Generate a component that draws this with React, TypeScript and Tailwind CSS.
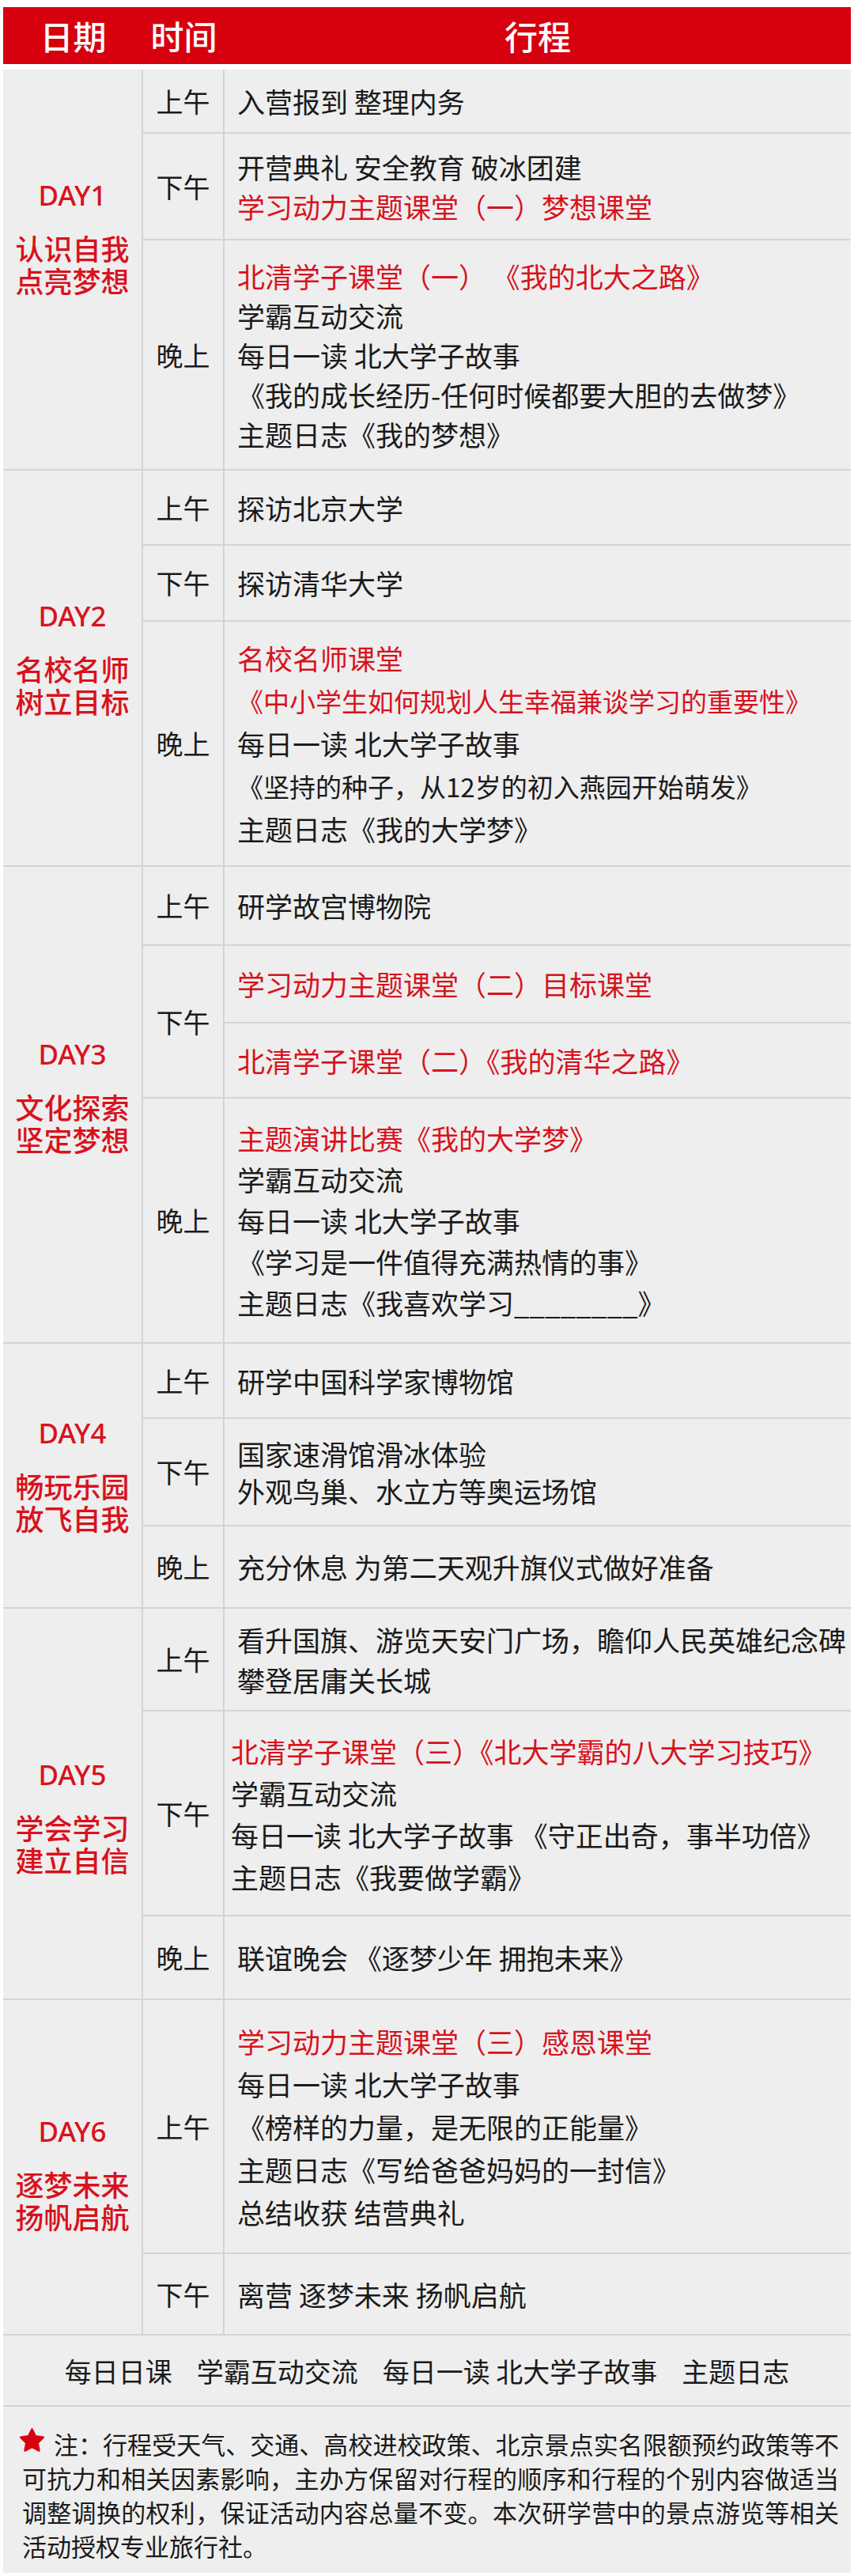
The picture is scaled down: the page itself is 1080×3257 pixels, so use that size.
import React from "react";

type Line = { t: string; red?: boolean; size?: string };
type Block = { lines: Line[]; h?: string; border?: boolean };
type Slot = {
  label: string;
  h: string;
  leading?: string;
  pl?: string;
  blocks: Block[];
};
type Day = { day: string; sub: string[]; pad: string; slots: Slot[] };

const one = (t: string, red = false): Block => ({ lines: [{ t, red }] });

const days: Day[] = [
  {
    day: "DAY1",
    sub: ["认识自我", "点亮梦想"],
    pad: "pb-[80px]",
    slots: [
      { label: "上午", h: "h-[81px]", blocks: [one("入营报到 整理内务")] },
      {
        label: "下午",
        h: "h-[135px]",
        leading: "leading-[50px]",
        blocks: [
          {
            lines: [
              { t: "开营典礼 安全教育 破冰团建" },
              { t: "学习动力主题课堂（一）梦想课堂", red: true },
            ],
          },
        ],
      },
      {
        label: "晚上",
        h: "h-[289px]",
        leading: "leading-[50px]",
        blocks: [
          {
            lines: [
              { t: "北清学子课堂（一） 《我的北大之路》", red: true },
              { t: "学霸互动交流" },
              { t: "每日一读 北大学子故事" },
              { t: "《我的成长经历-任何时候都要大胆的去做梦》" },
              { t: "主题日志《我的梦想》" },
            ],
          },
        ],
      },
    ],
  },
  {
    day: "DAY2",
    sub: ["名校名师", "树立目标"],
    pad: "pb-[24px]",
    slots: [
      { label: "上午", h: "h-[95px]", blocks: [one("探访北京大学")] },
      { label: "下午", h: "h-[96px]", blocks: [one("探访清华大学")] },
      {
        label: "晚上",
        h: "h-[308px]",
        leading: "leading-[54px]",
        blocks: [
          {
            lines: [
              { t: "名校名师课堂", red: true },
              { t: "《中小学生如何规划人生幸福兼谈学习的重要性》", red: true, size: "text-[33px]" },
              { t: "每日一读 北大学子故事" },
              { t: "《坚持的种子，从12岁的初入燕园开始萌发》", size: "text-[33px]" },
              { t: "主题日志《我的大学梦》" },
            ],
          },
        ],
      },
    ],
  },
  {
    day: "DAY3",
    sub: ["文化探索", "坚定梦想"],
    pad: "pb-[20px]",
    slots: [
      { label: "上午", h: "h-[100px]", blocks: [one("研学故宫博物院")] },
      {
        label: "下午",
        h: "h-[193px]",
        blocks: [
          { h: "h-[98px]", border: true, lines: [{ t: "学习动力主题课堂（二）目标课堂", red: true }] },
          { lines: [{ t: "北清学子课堂（二）《我的清华之路》", red: true }] },
        ],
      },
      {
        label: "晚上",
        h: "h-[308px]",
        leading: "leading-[52px]",
        blocks: [
          {
            lines: [
              { t: "主题演讲比赛《我的大学梦》", red: true },
              { t: "学霸互动交流" },
              { t: "每日一读 北大学子故事" },
              { t: "《学习是一件值得充满热情的事》" },
              { t: "主题日志《我喜欢学习________》" },
            ],
          },
        ],
      },
    ],
  },
  {
    day: "DAY4",
    sub: ["畅玩乐园", "放飞自我"],
    pad: "pb-[0px]",
    slots: [
      { label: "上午", h: "h-[95px]", blocks: [one("研学中国科学家博物馆")] },
      {
        label: "下午",
        h: "h-[136px]",
        leading: "leading-[47px]",
        blocks: [{ lines: [{ t: "国家速滑馆滑冰体验" }, { t: "外观鸟巢、水立方等奥运场馆" }] }],
      },
      { label: "晚上", h: "h-[102px]", blocks: [one("充分休息 为第二天观升旗仪式做好准备")] },
    ],
  },
  {
    day: "DAY5",
    sub: ["学会学习", "建立自信"],
    pad: "pt-[34px]",
    slots: [
      {
        label: "上午",
        h: "h-[130px]",
        leading: "leading-[51px]",
        blocks: [
          {
            lines: [{ t: "看升国旗、游览天安门广场，瞻仰人民英雄纪念碑" }, { t: "攀登居庸关长城" }],
          },
        ],
      },
      {
        label: "下午",
        h: "h-[259px]",
        leading: "leading-[53px]",
        pl: "pl-[8px]",
        blocks: [
          {
            lines: [
              { t: "北清学子课堂（三）《北大学霸的八大学习技巧》", red: true },
              { t: "学霸互动交流" },
              { t: "每日一读 北大学子故事 《守正出奇，事半功倍》" },
              { t: "主题日志《我要做学霸》" },
            ],
          },
        ],
      },
      { label: "晚上", h: "h-[104px]", blocks: [one("联谊晚会 《逐梦少年 拥抱未来》")] },
    ],
  },
  {
    day: "DAY6",
    sub: ["逐梦未来", "扬帆启航"],
    pad: "pt-[18px]",
    slots: [
      {
        label: "上午",
        h: "h-[321px]",
        leading: "leading-[54px]",
        blocks: [
          {
            lines: [
              { t: "学习动力主题课堂（三）感恩课堂", red: true },
              { t: "每日一读 北大学子故事" },
              { t: "《榜样的力量，是无限的正能量》" },
              { t: "主题日志《写给爸爸妈妈的一封信》" },
              { t: "总结收获 结营典礼" },
            ],
          },
        ],
      },
      { label: "下午", h: "h-[101px]", blocks: [one("离营 逐梦未来 扬帆启航")] },
    ],
  },
];

function Star() {
  return (
    <svg
      viewBox="0 0 24 24"
      className="inline-block w-[35px] h-[35px] align-baseline ml-[-5px] mr-[10px]"
    >
      <polygon
        points="12,2.2 15.1,8.4 21.9,9.4 17,14.2 18.2,21 12,17.8 5.8,21 7,14.2 2.1,9.4 8.9,8.4"
        fill="#d7000f"
        stroke="#d7000f"
        strokeWidth="1.6"
        strokeLinejoin="round"
      />
    </svg>
  );
}

function SlotRow({ slot, last }: { slot: Slot; last: boolean }) {
  return (
    <div
      className={
        last
          ? `flex ${slot.h}`
          : `flex ${slot.h} border-b-2 border-[#d4d4d4]`
      }
    >
      <div className="w-[103px] shrink-0 border-r-2 border-[#d4d4d4] flex items-center justify-center text-[34px] leading-[40px] text-[#1a1a1a]">
        {slot.label}
      </div>
      <div className="flex-1 flex flex-col">
        {slot.blocks.map((b, i) => (
          <div
            key={i}
            className={`${b.h ? b.h : "flex-1"} ${
              b.border ? "border-b-2 border-[#d4d4d4]" : ""
            } flex items-center ${slot.pl ?? "pl-[16px]"}`}
          >
            <div className={`${slot.leading ?? "leading-[50px]"} whitespace-nowrap`}>
              {b.lines.map((l, j) => (
                <div
                  key={j}
                  className={`${l.size ?? "text-[35px]"} ${
                    l.red ? "text-[#d8121d]" : "text-[#1a1a1a]"
                  }`}
                >
                  {l.t}
                </div>
              ))}
            </div>
          </div>
        ))}
      </div>
    </div>
  );
}

function DayBlock({ d }: { d: Day }) {
  return (
    <div className="flex border-b-2 border-[#d4d4d4]">
      <div
        className={`w-[177px] shrink-0 border-r-2 border-[#d4d4d4] flex flex-col items-center justify-center text-[#d8121d] ${d.pad}`}
      >
        <div className="font-['Noto_Sans',sans-serif] font-medium text-[35px] leading-[40px]">
          {d.day}
        </div>
        <p className="mt-[26px] text-[36px] leading-[41px] font-medium text-center">
          {d.sub[0]}
          <br />
          {d.sub[1]}
        </p>
      </div>
      <div className="flex-1 flex flex-col">
        {d.slots.map((s, i) => (
          <SlotRow key={i} slot={s} last={i === d.slots.length - 1} />
        ))}
      </div>
    </div>
  );
}

export default function App() {
  return (
    <div className="w-[1080px] bg-white pt-[9px] px-[4px] pb-[4px] font-['Noto_Sans_CJK_SC','Noto_Sans',sans-serif]">
      <div className="h-[72px] bg-[#d7000f] flex items-center text-white text-[42px] font-medium leading-none">
        <div className="w-[177px] text-center">日期</div>
        <div className="w-[103px] text-center">时间</div>
        <div className="flex-1 text-center">行程</div>
      </div>
      <div className="mt-[7px] bg-[#eeeeee]">
        {days.map((d) => (
          <DayBlock key={d.day} d={d} />
        ))}
        <div className="h-[90px] border-b-2 border-[#d4d4d4] flex items-center justify-center gap-[31px] text-[34px] text-[#1a1a1a] whitespace-nowrap">
          <span>每日日课</span>
          <span>学霸互动交流</span>
          <span>每日一读 北大学子故事</span>
          <span>主题日志</span>
        </div>
        <div className="h-[210px] pt-[25px] pl-[24px] pr-[15px] text-[31px] leading-[43px] text-[#1a1a1a]">
          <div className="[text-align-last:justify] text-justify">
            <Star />
            注：行程受天气、交通、高校进校政策、北京景点实名限额预约政策等不
          </div>
          <div className="[text-align-last:justify] text-justify">
            可抗力和相关因素影响，主办方保留对行程的顺序和行程的个别内容做适当
          </div>
          <div className="[text-align-last:justify] text-justify">
            调整调换的权利，保证活动内容总量不变。本次研学营中的景点游览等相关
          </div>
          <div>活动授权专业旅行社。</div>
        </div>
      </div>
    </div>
  );
}
